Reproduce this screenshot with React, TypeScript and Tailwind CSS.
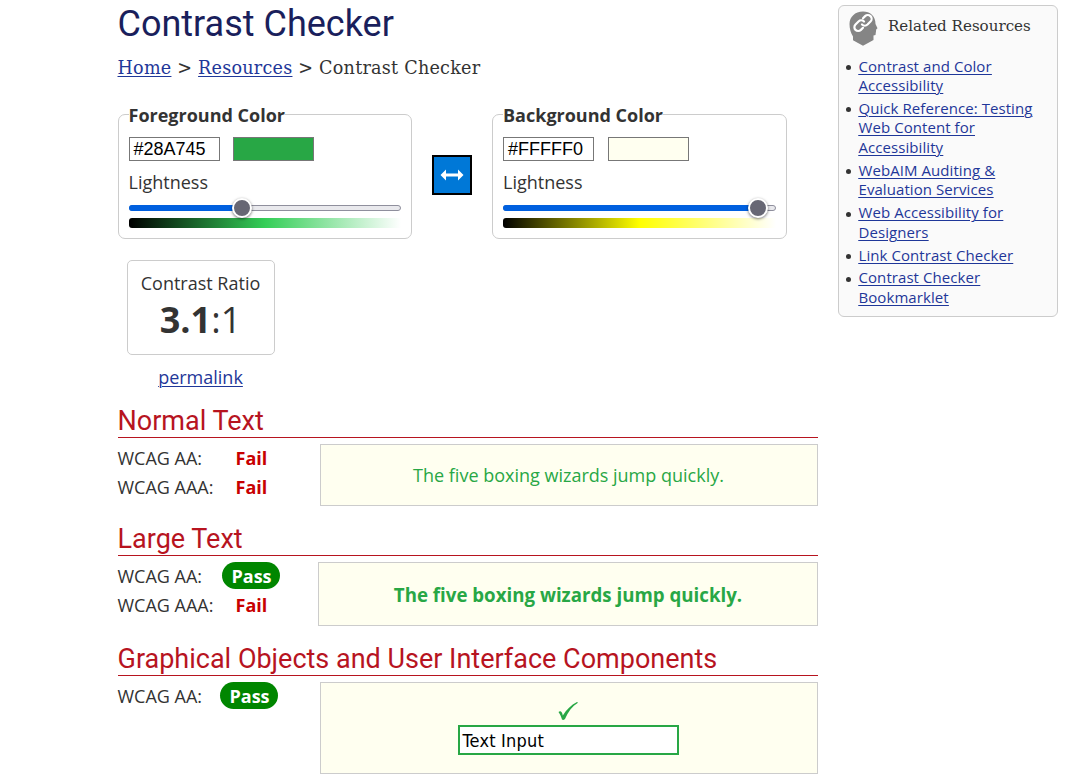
import React from 'react';

const link = 'text-[#1f3799] underline underline-offset-2 decoration-1';

type PickerProps = {
  title: string;
  hex: string;
  swatch: string;
  ramp: string;
  position: number;
  className: string;
  gap: string;
};

function Picker({ title, hex, swatch, ramp, position, className, gap }: PickerProps) {
  return (
    <section className={`h-[125px] rounded-[7px] border border-[#ccc] px-[10px] ${className}`}>
      <h3 className="-mt-[12px] flex h-6 w-max items-center bg-white text-[18px] leading-6 font-bold">{title}</h3>
      <div className={`mt-[10px] flex ${gap}`}>
        <div className="flex h-6 w-[91px] items-center border border-[#777] bg-white pl-1 font-['Liberation_Sans',sans-serif] text-[18px] leading-none text-black">{hex}</div>
        <div className={`h-6 w-[81px] border border-[#777] ${swatch}`} />
      </div>
      <div className="mt-[9px] h-6 text-[18px] leading-6">Lightness</div>
      <div className="relative mt-[11px] h-[6px] rounded-full border border-[#8f8f9d] bg-[#e9e9ed]">
        <div className="absolute -top-px -left-px h-[6px] rounded-full bg-[#0060df]" style={{ width: position }} />
        <div className="absolute -top-[8px] size-5 rounded-full border-2 border-white bg-[#676774] shadow-[0_1px_3px_rgba(0,0,0,0.55)]" style={{ left: position - 10.5 }} />
      </div>
      <div className={`mt-[7px] h-[10px] rounded-l-[3px] ${ramp}`} />
    </section>
  );
}

function Result({ level, pass, offset }: { level: string; pass?: boolean; offset: string }) {
  return (
    <div className="flex h-[29px] items-center text-[18px] leading-[29px]">
      <span className="w-[102px] shrink-0">{level}</span>
      {pass ? (
        <strong className={`-mt-[2px] flex h-[27px] w-[58px] items-center justify-center rounded-full bg-[#008600] pt-[2px] pl-[2px] text-white ${offset}`}>Pass</strong>
      ) : (
        <strong className="ml-4 text-[#c80000]">Fail</strong>
      )}
    </div>
  );
}

function Heading({ children, className }: { children: React.ReactNode; className: string }) {
  return (
    <h2 className={`h-[34px] border-b border-[#b7141f] font-['Roboto',sans-serif] text-[27px] leading-[34px] whitespace-nowrap text-[#b7141f] ${className}`}>
      {children}
    </h2>
  );
}

const resources = [
  ['Contrast and Color', 'Accessibility'],
  ['Quick Reference: Testing', 'Web Content for', 'Accessibility'],
  ['WebAIM Auditing &', 'Evaluation Services'],
  ['Web Accessibility for', 'Designers'],
  ['Link Contrast Checker'],
  ['Contrast Checker', 'Bookmarklet'],
];

export default function App() {
  return (
    <div className="flex h-[784px] overflow-hidden bg-white pl-[117.5px] font-['Open_Sans',sans-serif] text-[#333]">
      <main className="w-[700px] shrink-0">
        <h1 className="h-12 font-['Roboto',sans-serif] text-[36px] leading-[48px] text-[#1a1f5c]">Contrast Checker</h1>
        <nav className="mt-[6px] h-7 font-['DejaVu_Serif',serif] text-[17.6px] leading-[28px] tracking-[0.23px] whitespace-pre">
          <a className={link}>Home</a> &gt; <a className={link}>Resources</a> &gt; Contrast Checker
        </nav>
        <div className="mt-[32px] flex">
          <Picker title="Foreground Color" hex="#28A745" swatch="bg-[#28a745]" gap="gap-[13px]" position={113} className="w-[294px]" ramp="bg-[linear-gradient(to_right,#000,#34ce57_50%,#fff)]" />
          <button className="mt-[41px] ml-5 flex h-10 w-10 items-center justify-center border-[2.5px] border-black bg-[#0078d7]">
            <svg className="shrink-0" width="24" height="12" viewBox="0 0 24 12" fill="white"><path d="M.5 6 6 .5V4.5H18V.5L23.5 6 18 11.5V7.5H6V11.5Z" /></svg>
          </button>
          <Picker title="Background Color" hex="#FFFFF0" swatch="bg-[#fffff0]" gap="gap-[14px]" position={254.5} className="ml-[20.5px] w-[295px]" ramp="bg-[linear-gradient(to_right,#000,#ff0_50%,#fff)]" />
        </div>
        <div className="mt-[21px] ml-[9px] flex h-[95px] w-[148px] flex-col items-center rounded-[5px] border border-[#ccc] pt-[10px]">
          <div className="h-6 text-[18px] leading-6">Contrast Ratio</div>
          <div className="mt-px h-12 text-[36px] leading-[48px]"><b>3.1</b>:1</div>
        </div>
        <div className="mt-[10px] ml-[9px] h-6 w-[148px] text-center text-[18px] leading-6"><a className={link}>permalink</a></div>

        <Heading className="mt-[15px]">Normal Text</Heading>
        <div className="mt-[6px] flex h-[62px] justify-between">
          <div><Result level="WCAG AA:" offset="" /><Result level="WCAG AAA:" offset="" /></div>
          <div className="flex w-[498px] items-center justify-center border border-[#ccc] bg-[#fffff0] text-[18px] text-[#28a745]">The five boxing wizards jump quickly.</div>
        </div>

        <Heading className="mt-[16px]">Large Text</Heading>
        <div className="mt-[6px] flex h-[64px] justify-between">
          <div><Result level="WCAG AA:" pass offset="ml-[2px]" /><Result level="WCAG AAA:" offset="" /></div>
          <div className="flex w-[500px] items-center justify-center border border-[#ccc] bg-[#fffff0] pt-[2px] pl-px text-[18.7px] font-bold text-[#28a745]">The five boxing wizards jump quickly.</div>
        </div>

        <Heading className="mt-[16px]">Graphical Objects and User Interface Components</Heading>
        <div className="mt-[6px] flex h-[92px] justify-between">
          <div><Result level="WCAG AA:" pass offset="" /></div>
          <div className="flex w-[498px] flex-col items-center border border-[#ccc] bg-[#fffff0] pt-[19px] pr-px">
            <svg width="20" height="19" viewBox="0 0 20 19" fill="#28a745"><path d="M.5 10C2 8.8 4 8.7 4.8 13.5 8.5 7.5 13 3 19 0L20 .8C14 4.5 10 10 7 17 5.5 18.2 4.8 18 4 17.5 3.2 15 2 12 .5 10Z" /></svg>
            <div className="mt-[4px] flex h-[30px] w-[221px] items-center border-2 border-[#28a745] bg-white pl-[3px] font-['DejaVu_Sans_Condensed','DejaVu_Sans',sans-serif] text-[18px] tracking-[0.2px] text-black">Text Input</div>
          </div>
        </div>
      </main>

      <aside className="mt-[5px] ml-[20.5px] h-[312px] w-[220px] shrink-0 rounded-[6px] border border-[#ccc] bg-[#fafafa]">
        <div className="flex h-[50.5px] pt-[5px] pl-[10px]">
          <svg width="30" height="35" viewBox="0 0 30 35"><path fill="#858585" d="M14 .5C6 .5.5 6 .5 13c0 5 1.3 9 3.5 12.5v3.8L14 34.8 24.5 29V24.5L26.5 24 27.2 18.5 28.5 17.2 26.5 13C26.5 5 21 .5 14 .5Z" /><g transform="translate(4.5 3)" fill="none" stroke="white" strokeWidth="2.2" strokeLinecap="round"><path d="M8.5 10.5a4 4 0 0 0 5.5 0l3-3a3.8 3.8 0 0 0-5.4-5.4L9.5 4.2M10.5 7.5a4 4 0 0 0-5.5 0l-3 3a3.8 3.8 0 0 0 5.4 5.4l2.1-2.1" /></g></svg>
          <h2 className="ml-[9px] h-7 font-['DejaVu_Serif',serif] text-[15.1px] leading-[30px] whitespace-nowrap">Related Resources</h2>
        </div>
        <ul className="flex flex-col gap-[3.4px] text-[15px] leading-[19.5px] tracking-[0.07px]">
          {resources.map((lines) => (
            <li className="flex pl-[7px]" key={lines.join(' ')}>
              <span className="mt-[8.5px] mr-[7px] size-[5px] shrink-0 rounded-full bg-[#333]" />
              <a className={`${link} pl-[0.5px]`}>
                {lines.map((line) => <span className="block whitespace-nowrap underline underline-offset-2" key={line}>{line}</span>)}
              </a>
            </li>
          ))}
        </ul>
      </aside>
    </div>
  );
}
